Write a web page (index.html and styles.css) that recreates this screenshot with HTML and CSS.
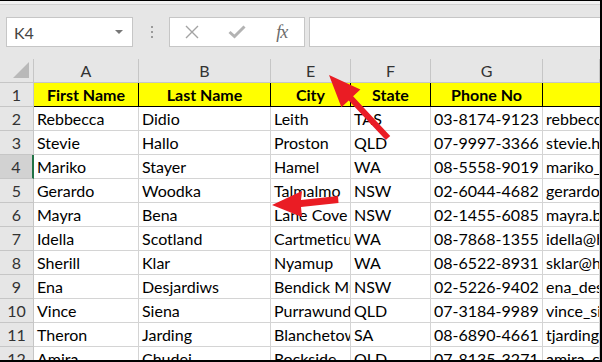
FILE: index.html
```html
<!DOCTYPE html>
<html lang="en">
<head>
  <meta charset="UTF-8" />
  <title>Contacts - Excel</title>
  <link rel="stylesheet" href="styles.css">
</head>
<body>
  <div class="window">
    <div class="toolbar">
      <div class="namebox">
        <span>K4</span>
        <span class="caret"></span>
      </div>
      <div class="grip"><i></i><i></i><i></i></div>
      <div class="fxbuttons">
        <svg width="16" height="14" viewBox="0 0 16 14"><path d="M2 1 L14 13 M14 1 L2 13" stroke="#a3a3a3" stroke-width="1.4" fill="none"/></svg>
        <svg width="18" height="14" viewBox="0 0 18 14"><path d="M1.5 7 L6.5 11.5 L16.5 1.5" stroke="#b3b3b3" stroke-width="3" fill="none"/></svg>
        <span class="fx">fx</span>
      </div>
      <div class="formula"></div>
    </div>

    <div class="sheet">
      <div class="corner"><svg width="18" height="18" viewBox="0 0 18 18"><polygon points="17,1 17,17 1,17" fill="#b9b9b9"/></svg></div>
      <div class="colhead">A</div>
      <div class="colhead">B</div>
      <div class="colhead">E</div>
      <div class="colhead">F</div>
      <div class="colhead">G</div>
      <div class="colhead"></div>

      <div class="rowhead">1</div>
      <div class="cell title">First Name</div>
      <div class="cell title">Last Name</div>
      <div class="cell title">City</div>
      <div class="cell title">State</div>
      <div class="cell title">Phone No</div>
      <div class="cell title last"></div>

      <div class="rowhead">2</div>
      <div class="cell">Rebbecca</div>
      <div class="cell">Didio</div>
      <div class="cell">Leith</div>
      <div class="cell">TAS</div>
      <div class="cell">03-8174-9123</div>
      <div class="cell">rebbecca.didio@didio.com.au</div>

      <div class="rowhead">3</div>
      <div class="cell">Stevie</div>
      <div class="cell">Hallo</div>
      <div class="cell">Proston</div>
      <div class="cell">QLD</div>
      <div class="cell">07-9997-3366</div>
      <div class="cell">stevie.hallo@hotmail.com</div>

      <div class="rowhead active">4</div>
      <div class="cell">Mariko</div>
      <div class="cell">Stayer</div>
      <div class="cell">Hamel</div>
      <div class="cell">WA</div>
      <div class="cell">08-5558-9019</div>
      <div class="cell">mariko_stayer@hotmail.com</div>

      <div class="rowhead">5</div>
      <div class="cell">Gerardo</div>
      <div class="cell">Woodka</div>
      <div class="cell">Talmalmo</div>
      <div class="cell">NSW</div>
      <div class="cell">02-6044-4682</div>
      <div class="cell">gerardo_woodka@hotmail.com</div>

      <div class="rowhead">6</div>
      <div class="cell">Mayra</div>
      <div class="cell">Bena</div>
      <div class="cell">Lane Cove</div>
      <div class="cell">NSW</div>
      <div class="cell">02-1455-6085</div>
      <div class="cell">mayra.bena@gmail.com</div>

      <div class="rowhead">7</div>
      <div class="cell">Idella</div>
      <div class="cell">Scotland</div>
      <div class="cell">Cartmeticup</div>
      <div class="cell">WA</div>
      <div class="cell">08-7868-1355</div>
      <div class="cell">idella@hotmail.com</div>

      <div class="rowhead">8</div>
      <div class="cell">Sherill</div>
      <div class="cell">Klar</div>
      <div class="cell">Nyamup</div>
      <div class="cell">WA</div>
      <div class="cell">08-6522-8931</div>
      <div class="cell">sklar@hotmail.com</div>

      <div class="rowhead">9</div>
      <div class="cell">Ena</div>
      <div class="cell">Desjardiws</div>
      <div class="cell">Bendick Murrell</div>
      <div class="cell">NSW</div>
      <div class="cell">02-5226-9402</div>
      <div class="cell">ena_desjardiws@desjardiws.com.au</div>

      <div class="rowhead">10</div>
      <div class="cell">Vince</div>
      <div class="cell">Siena</div>
      <div class="cell">Purrawunda</div>
      <div class="cell">QLD</div>
      <div class="cell">07-3184-9989</div>
      <div class="cell">vince_siena@yahoo.com</div>

      <div class="rowhead">11</div>
      <div class="cell">Theron</div>
      <div class="cell">Jarding</div>
      <div class="cell">Blanchetown</div>
      <div class="cell">SA</div>
      <div class="cell">08-6890-4661</div>
      <div class="cell">tjarding@hotmail.com</div>

      <div class="rowhead">12</div>
      <div class="cell">Amira</div>
      <div class="cell">Chudej</div>
      <div class="cell">Rockside</div>
      <div class="cell">QLD</div>
      <div class="cell">07-8135-3271</div>
      <div class="cell">amira_chudej@chudej.net.au</div>
    </div>

    <!-- callout arrows drawn over the sheet -->
    <svg class="arrows" width="602" height="362" viewBox="0 0 602 362">
      <polygon points="329,75 360.4,89.5 353.1,96.3 390.2,136 385.8,140.1 348.7,100.5 341.4,107.3" fill="#ea1c24"/>
      <polygon points="272,205 302,191 301,200 338,196 338.5,203 301,207 302,217" fill="#ea1c24"/>
    </svg>
  </div>
</body>
</html>
```

FILE: styles.css
```css
:root {
  --chrome: #e6e6e6;
  --box-line: #c6c6c6;
  --grid: #d4d4d4;
  --head-line: #c6c6c6;
  --head-text: #333;
  --selected: #217346;
}
body {
  margin: 0;
  font-family: Lato, "Open Sans", sans-serif;
}
.window {
  position: relative;
  width: 602px;
  height: 362px;
  box-sizing: border-box;
  border-top: 1px solid #000;
  border-right: 2px solid #000;
  border-bottom: 2px solid #000;
  overflow: hidden;
  background: #fff;
}
.toolbar {
  display: flex;
  align-items: center;
  height: 58px;
  box-sizing: border-box;
  padding: 13px 0 12px 6px;
  background: var(--chrome);
  border-top: 3px solid #f2f2f2;
  box-shadow: inset 0 1px 0 #d2d2d2;
}
.namebox {
  display: flex;
  align-items: center;
  justify-content: space-between;
  width: 127px;
  height: 30px;
  box-sizing: border-box;
  padding: 0 9px 0 7px;
  background: #fff;
  border: 1px solid var(--box-line);
  font-size: 16px;
  color: #444;
}
.caret {
  width: 0;
  height: 0;
  border-left: 4px solid transparent;
  border-right: 4px solid transparent;
  border-top: 4px solid #777;
}
.grip {
  display: flex;
  flex-direction: column;
  gap: 3px;
  margin: 0 16px 0 18px;
}
.grip i {
  width: 2px;
  height: 2px;
  background: #9a9a9a;
}
.fxbuttons {
  display: grid;
  grid-template-columns: 1fr 1fr 1fr;
  align-items: center;
  justify-items: center;
  width: 136px;
  height: 30px;
  box-sizing: border-box;
  background: #fff;
  border: 1px solid var(--box-line);
}
.fx {
  font-family: "Liberation Serif", serif;
  font-style: italic;
  font-size: 18px;
  color: #6a6a6a;
  letter-spacing: -1px;
}
.formula {
  flex: 1;
  height: 30px;
  margin-left: 4px;
  box-sizing: border-box;
  background: #fff;
  border: 1px solid var(--box-line);
  border-right: none;
}
.sheet {
  display: grid;
  grid-template-columns: 34px 105px 132px 80px 80px 112px 57px;
  grid-auto-rows: 24px;
  font-size: 16px;
}
.corner,
.colhead,
.rowhead {
  box-sizing: border-box;
  background: var(--chrome);
  color: var(--head-text);
  border-right: 1px solid var(--head-line);
  border-bottom: 1px solid var(--head-line);
  line-height: 23px;
  text-align: center;
}
.corner {
  display: flex;
  align-items: flex-end;
  justify-content: flex-end;
  padding: 0 3px 3px 0;
}
.colhead:last-child {
  border-right: none;
}
.rowhead.active {
  background: #d2d2d2;
  border-right: 2px solid var(--selected);
}
.cell {
  box-sizing: border-box;
  padding: 0 3px;
  line-height: 23px;
  white-space: nowrap;
  overflow: hidden;
  color: #000;
  border-right: 1px solid var(--grid);
  border-bottom: 1px solid var(--grid);
}
.cell.title {
  background: #ffff00;
  font-weight: bold;
  text-align: center;
  border-right-color: #000;
  border-bottom-color: #000;
}
.cell.title.last {
  border-right: none;
}
.arrows {
  position: absolute;
  top: -1px;
  left: 0;
}
```
